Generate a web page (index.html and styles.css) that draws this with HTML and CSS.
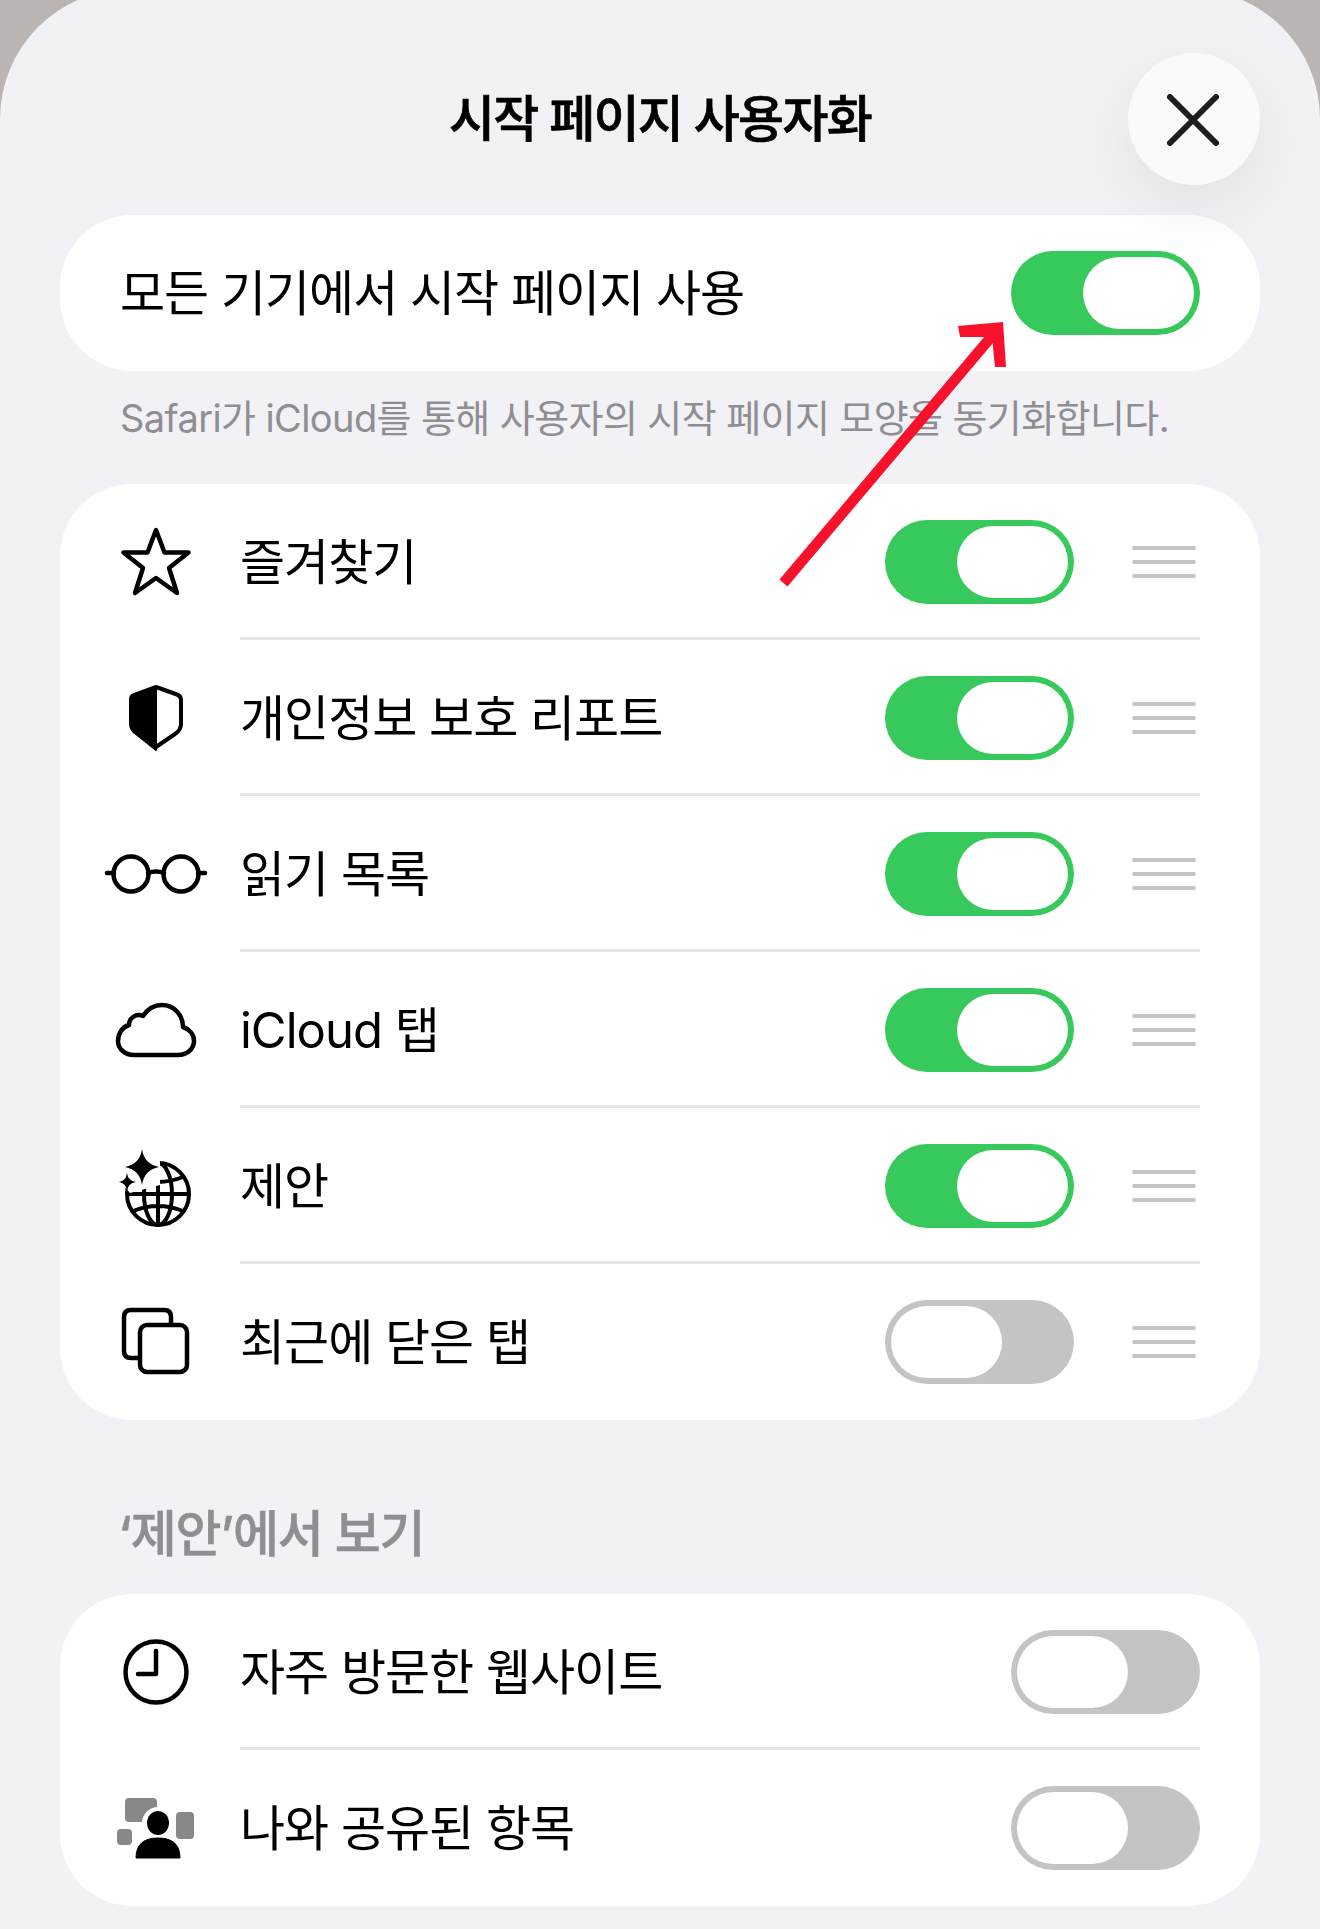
FILE: index.html
```html
<!DOCTYPE html>
<html lang="ko">

<head>
    <meta charset="UTF-8">
    <title>시작 페이지 사용자화</title>
    <link rel="stylesheet" href="styles.css">
</head>

<body>
    <div class="sheet">
        <div class="header">
            <h1>시작 페이지 사용자화</h1>
            <div class="closebtn">
                <svg width="52" height="52" viewBox="0 0 52 52"><path d="M3 3L49 49M49 3L3 49" fill="none" stroke="#1c1c1e" stroke-width="6" stroke-linecap="round"/></svg>
            </div>
        </div>

        <div class="card topcard">
            <div class="toprow">
                <span class="label">모든 기기에서 시작 페이지 사용</span>
                <div class="toggle on"><div class="knob"></div></div>
            </div>
        </div>
        <p class="note">Safari가 iCloud를 통해 사용자의 시작 페이지 모양을 동기화합니다.</p>

        <div class="card list">
            <div class="row">
                <svg class="icon" viewBox="0 0 112 112"><path d="M56 24L64.500 46.500H88.500L69 62L77 87L56 72L35 87L43 62L23.500 46.500H47.500Z" fill="none" stroke="#000" stroke-width="4.500" stroke-linejoin="round"/></svg>
                <div class="rowbody">
                    <span class="label">즐겨찾기</span>
                    <div class="toggle on"><div class="knob"></div></div>
                    <div class="handle"><i></i><i></i><i></i></div>
                </div>
            </div>
            <div class="row">
                <svg class="icon" viewBox="0 0 112 112"><path d="M56 24L34 32Q30 33.500 30 37V62Q30 68 36 72L56 88Z" fill="#000" stroke="#000" stroke-width="2" stroke-linejoin="round"/><path d="M56 25L77 32.500Q81 34 81 38V62Q81 68 75 72L56 85" fill="none" stroke="#000" stroke-width="4" stroke-linejoin="round"/></svg>
                <div class="rowbody">
                    <span class="label">개인정보 보호 리포트</span>
                    <div class="toggle on"><div class="knob"></div></div>
                    <div class="handle"><i></i><i></i><i></i></div>
                </div>
            </div>
            <div class="row">
                <svg class="icon" viewBox="0 0 112 112"><g fill="none" stroke="#000" stroke-width="4.500"><circle cx="31" cy="56" r="17.500"/><circle cx="81" cy="56" r="17.500"/><path d="M48 55Q56 52 64 55M7 55H14M98 55H105" stroke-linecap="round"/></g></svg>
                <div class="rowbody">
                    <span class="label">읽기 목록</span>
                    <div class="toggle on"><div class="knob"></div></div>
                    <div class="handle"><i></i><i></i><i></i></div>
                </div>
            </div>
            <div class="row">
                <svg class="icon" viewBox="0 0 112 112"><path d="M34 81H78C88 81 94 74 94 67C94 60 89 55 83 53C83 41 74 31 62 31C53 31 47 36 43 42C36 39 29 44 29 51C22 53 18 60 18 67C18 75 25 81 34 81Z" fill="none" stroke="#000" stroke-width="4.500" stroke-linejoin="round"/></svg>
                <div class="rowbody">
                    <span class="label">iCloud 탭</span>
                    <div class="toggle on"><div class="knob"></div></div>
                    <div class="handle"><i></i><i></i><i></i></div>
                </div>
            </div>
            <div class="row">
                <svg class="icon" viewBox="0 0 112 112">
                    <g fill="none" stroke="#000" stroke-width="4">
                        <circle cx="58" cy="64" r="31"/>
                        <ellipse cx="58" cy="64" rx="14" ry="31"/>
                        <path d="M58 33V95M27 64H89M33 47Q58 57 83 47M33 81Q58 71 83 81"/>
                    </g>
                    <path d="M17 48L52 17H60L60 55L30 63Z" fill="#fff"/>
                    <path d="M42 19Q44 34 59 37Q44 40 42 55Q40 40 25 37Q40 34 42 19Z" fill="#000"/>
                    <path d="M27 43Q28 51 36 52Q28 53 27 61Q26 53 19 52Q26 51 27 43Z" fill="#000"/>
                </svg>
                <div class="rowbody">
                    <span class="label">제안</span>
                    <div class="toggle on"><div class="knob"></div></div>
                    <div class="handle"><i></i><i></i><i></i></div>
                </div>
            </div>
            <div class="row">
                <svg class="icon" viewBox="0 0 112 112"><g fill="none" stroke="#000" stroke-width="4.500"><path d="M38 72H31Q24 72 24 65V31Q24 24 31 24H64Q71 24 71 31V37"/><rect x="40" y="39" width="47" height="47" rx="7"/></g></svg>
                <div class="rowbody">
                    <span class="label">최근에 닫은 탭</span>
                    <div class="toggle"><div class="knob"></div></div>
                    <div class="handle"><i></i><i></i><i></i></div>
                </div>
            </div>
        </div>

        <h2 class="section">‘제안’에서 보기</h2>

        <div class="card list">
            <div class="row">
                <svg class="icon" viewBox="0 0 112 112"><g fill="none" stroke="#000" stroke-width="4.500" stroke-linecap="round"><circle cx="56" cy="56" r="30.500"/><path d="M56 35V58H38" stroke-linejoin="round"/></g></svg>
                <div class="rowbody">
                    <span class="label">자주 방문한 웹사이트</span>
                    <div class="toggle"><div class="knob"></div></div>
                </div>
            </div>
            <div class="row">
                <svg class="icon" viewBox="0 0 112 112">
                    <rect x="25" y="26" width="32" height="24" rx="4" fill="#888"/>
                    <rect x="17" y="57" width="15" height="16" rx="4" fill="#888"/>
                    <rect x="76" y="40" width="18" height="27" rx="4" fill="#888"/>
                    <circle cx="58" cy="51" r="16" fill="#fff"/>
                    <ellipse cx="58" cy="51" rx="11" ry="12" fill="#000"/>
                    <path d="M36 86Q36 66 58 66Q80 66 80 86Z" fill="#000" stroke="#000" stroke-linejoin="round"/>
                </svg>
                <div class="rowbody">
                    <span class="label">나와 공유된 항목</span>
                    <div class="toggle"><div class="knob"></div></div>
                </div>
            </div>
        </div>

        <svg class="arrow" width="1320" height="600" viewBox="0 0 1320 600"><path d="M783.500 583L997 330" stroke="#f7112b" stroke-width="10.500" fill="none"/><path d="M958 326L1003 322L1006 367L995 367L992 337L960 337Z" fill="#f7112b"/></svg>
    </div>
</body>

</html>
```

FILE: styles.css
```css
* {
    margin: 0;
    padding: 0;
    box-sizing: border-box;
}

body {
    background-color: #bab5b2;
    font-family: Inter, "Noto Sans CJK KR", sans-serif;
    color: #000;
}

/* sheet starts a bit above the window, so its corner looks cut off */
.sheet {
    position: relative;
    height: 1940px;
    margin-top: -11px;
    padding: 0 60px;
    background-color: #f1f1f6;
    border-radius: 130px 130px 0 0;
    overflow: hidden;
}

.header {
    display: grid;
    grid-template-columns: 1fr auto 1fr;
    align-items: center;
    height: 226px;
    padding-top: 34px;
}

.header h1 {
    grid-column: 2;
    padding-bottom: 8px;
    font-size: 50px;
    font-weight: 500;
    letter-spacing: -1.700px;
    -webkit-text-stroke: 0.7px #000;
}

.closebtn {
    grid-column: 3;
    justify-self: end;
    position: relative;
    z-index: 1;
    display: flex;
    align-items: center;
    justify-content: center;
    width: 132px;
    height: 132px;
    padding: 2px 2px 0 0;
    border-radius: 50%;
    background-color: #fafafd;
    box-shadow: 0 24px 70px rgba(0, 0, 0, 0.07);
}

.card {
    background-color: #fff;
    border-radius: 72px;
}

.topcard {
    height: 156px;
}

.toprow {
    display: flex;
    align-items: center;
    justify-content: space-between;
    height: 100%;
    padding: 0 60px;
}

.label {
    padding-bottom: 8px;
    font-size: 49px;
    letter-spacing: -1px;
    white-space: nowrap;
}

.note {
    height: 113px;
    padding: 17px 60px 0;
    font-size: 38px;
    letter-spacing: -0.600px;
    color: #8e8e93;
    white-space: nowrap;
}

.list {
    overflow: hidden;
}

.row {
    display: flex;
    align-items: center;
    height: 156px;
}

.icon {
    flex: none;
    width: 112px;
    height: 112px;
    margin: 0 28px 0 40px;
}

.rowbody {
    flex: 1;
    display: flex;
    align-items: center;
    height: 100%;
    margin-right: 60px;
    padding-top: 3px;
    border-bottom: 3px solid #e6e6e8;
}

.row:last-child .rowbody {
    padding-top: 0;
    border-bottom: none;
}

.rowbody .label {
    flex: 1;
}

.toggle {
    flex: none;
    display: flex;
    align-items: center;
    width: 189px;
    height: 84px;
    padding: 0 6px;
    border-radius: 42px;
    background-color: #c4c4c6;
}

.toggle.on {
    justify-content: flex-end;
    background-color: #38c95c;
}

.knob {
    width: 111px;
    height: 72px;
    border-radius: 36px;
    background-color: #fff;
}

.handle {
    display: flex;
    flex-direction: column;
    gap: 10px;
    width: 64px;
    margin: 0 4px 0 58px;
}

.handle i {
    display: block;
    height: 4px;
    border-radius: 2px;
    background-color: #c4c4c6;
}

.section {
    height: 174px;
    padding: 74px 58px 0;
    font-size: 50px;
    font-weight: 500;
    letter-spacing: -1.200px;
    color: #8e8e93;
    -webkit-text-stroke: 0.5px #8e8e93;
    white-space: nowrap;
}

/* annotation drawn on top of the screenshot */
.arrow {
    position: absolute;
    left: 0;
    top: 11px;
    z-index: 2;
}
```
